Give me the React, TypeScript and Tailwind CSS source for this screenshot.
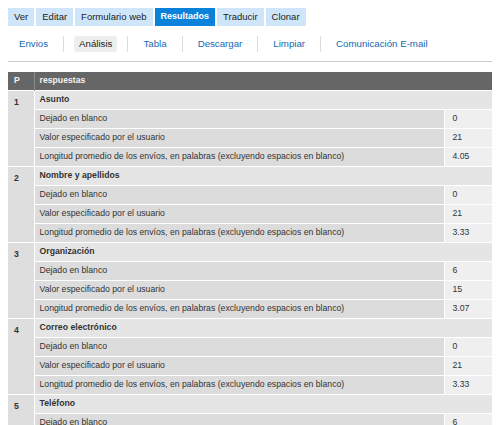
import React from "react";

const mainTabs = ["Ver", "Editar", "Formulario web", "Resultados", "Traducir", "Clonar"];
const subTabs = ["Envios", "Análisis", "Tabla", "Descargar", "Limpiar", "Comunicación E-mail"];

const questions = [
  { n: 1, title: "Asunto", values: ["0", "21", "4.05"] },
  { n: 2, title: "Nombre y apellidos", values: ["0", "21", "3.33"] },
  { n: 3, title: "Organización", values: ["6", "15", "3.07"] },
  { n: 4, title: "Correo electrónico", values: ["0", "21", "3.33"] },
  { n: 5, title: "Teléfono", values: ["6", "15", "3.10"] },
];

const labels = [
  "Dejado en blanco",
  "Valor especificado por el usuario",
  "Longitud promedio de los envíos, en palabras (excluyendo espacios en blanco)",
];

export default function App() {
  return (
    <div className="min-h-screen bg-white px-[8px] pt-[8px] text-[#333] font-['Liberation_Sans',Arial,sans-serif]">
      {/* Primary tabs */}
      <div className="flex gap-[2px]">
        {mainTabs.map((t) => (
          <div
            key={t}
            className={
              t === "Resultados"
                ? "h-[18px] px-[6px] flex items-center bg-[#0b82d9] text-white text-[9px] font-bold"
                : "h-[18px] px-[6px] flex items-center bg-[#cfe6fa] text-[#222] text-[9.5px]"
            }
          >
            {t}
          </div>
        ))}
      </div>

      {/* Secondary tabs */}
      <div className="flex items-center pl-[6px] mt-[10px] h-[16px]">
        {subTabs.map((t, i) => (
          <React.Fragment key={t}>
            {i > 0 && <div className="w-px h-[16px] bg-[#dcdcdc] mx-[10px]" />}
            <div
              className={
                t === "Análisis"
                  ? "h-[16px] px-[5px] flex items-center rounded-[3px] bg-[#eeeeee] text-[#1a1a1a] text-[9.7px]"
                  : "h-[16px] px-[5px] flex items-center text-[#1469b3] text-[9.7px]"
              }
            >
              {t}
            </div>
          </React.Fragment>
        ))}
      </div>

      <div className="mt-[9px] h-px bg-[#cccccc]" />

      {/* Results table */}
      <table className="mt-[10px] w-[484px] border-collapse text-[8.7px] table-fixed">
        <colgroup>
          <col className="w-[26px]" />
          <col />
          <col className="w-[47px]" />
        </colgroup>
        <thead>
          <tr className="bg-[#666666] text-[#f2f2f2]">
            <th className="h-[18px] px-[6px] text-left font-bold border-r border-[#8a8a8a]">P</th>
            <th colSpan={2} className="h-[18px] px-[5px] text-left font-bold">
              respuestas
            </th>
          </tr>
        </thead>
        <tbody>
          {questions.map((q) => (
            <React.Fragment key={q.n}>
              <tr>
                <td
                  rowSpan={4}
                  className="align-top bg-[#dedede] px-[6px] pt-[5px] font-bold border border-white border-l-0"
                >
                  {q.n}
                </td>
                <td colSpan={2} className="h-[19px] bg-[#e5e5e5] px-[5px] pt-[1px] font-bold border border-white border-r-0">
                  {q.title}
                </td>
              </tr>
              {labels.map((l, i) => (
                <tr key={l}>
                  <td className="h-[19px] bg-[#dcdcdc] px-[5px] pt-[1px] border border-white whitespace-nowrap">{l}</td>
                  <td className="h-[19px] bg-[#efefef] px-[7px] pt-[1px] border border-white border-r-0">{q.values[i]}</td>
                </tr>
              ))}
            </React.Fragment>
          ))}
        </tbody>
      </table>
    </div>
  );
}
